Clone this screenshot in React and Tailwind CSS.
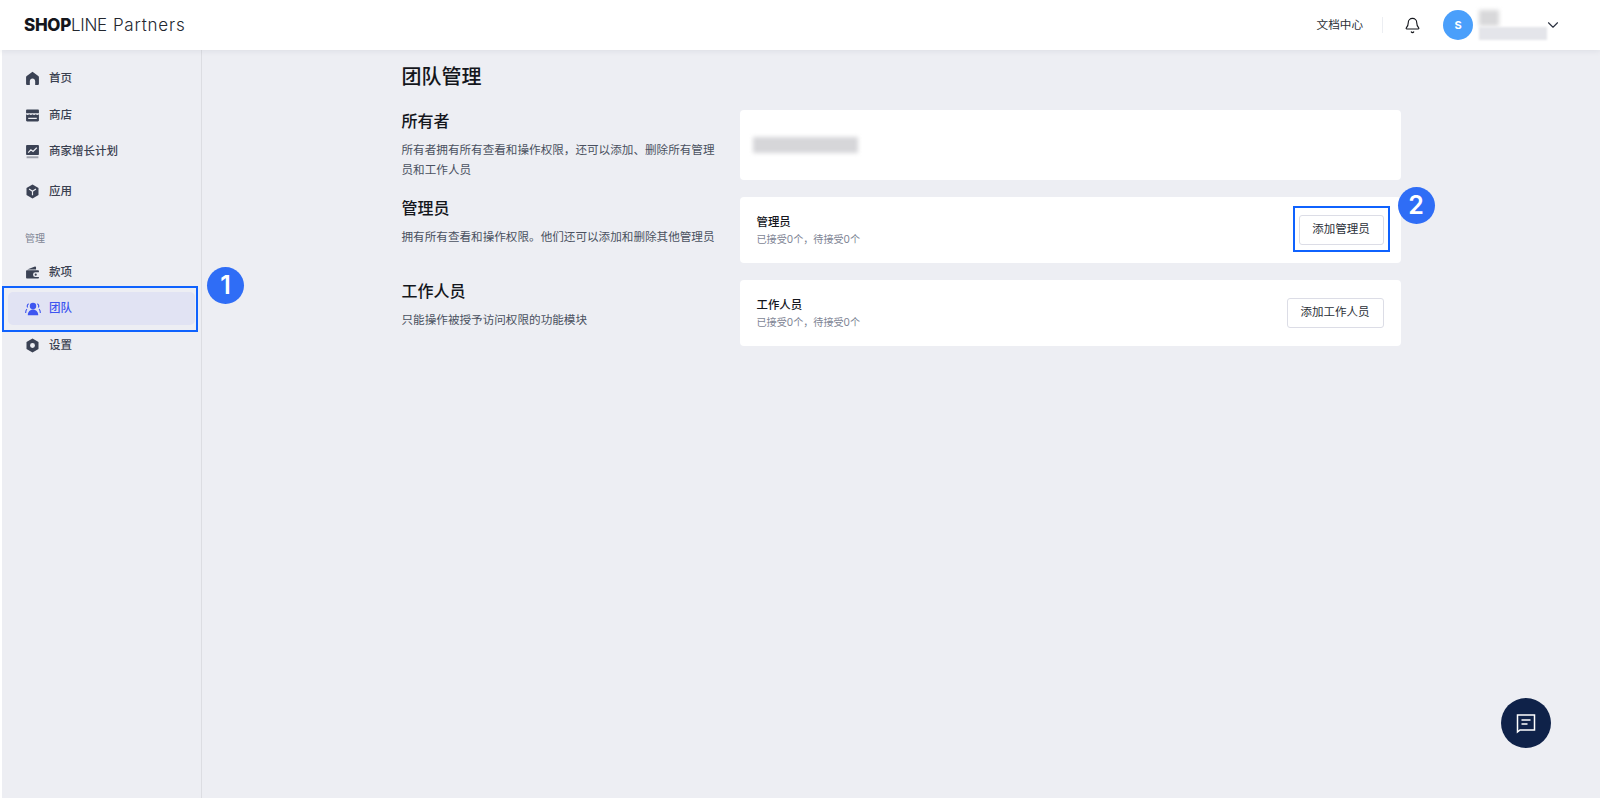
import { Bell, ChevronDown } from 'lucide-react';

const cjk = { fontFamily: 'Inter, "Noto Sans CJK SC", sans-serif' };

function HomeIcon () {
  return (
    <svg width="15" height="15" viewBox="0 0 14 14" fill="currentColor">
      <path d="M7 .8 1.600 4.600c-.4.3-.6.7-.6 1.200v6c0 .7.5 1.200 1.200 1.200h2.300V9.600c0-1.400 1.100-2.500 2.500-2.500s2.500 1.100 2.500 2.500V13h2.300c.7 0 1.200-.5 1.200-1.200v-6c0-.5-.2-.9-.6-1.200L7 .8Z" />
    </svg>
  );
}

function StoreIcon () {
  return (
    <svg width="15" height="15" viewBox="0 0 14 14" fill="currentColor">
      <path d="M2 1.500h10c.6 0 1 .4 1 1V5H1V2.500c0-.6.4-1 1-1Z" />
      <path fillRule="evenodd" d="M1 5.800c1 1 2 1 3 0 1 1 2 1 3 0 1 1 2 1 3 0 1 1 2 1 3 0v5.700c0 .6-.4 1-1 1H2c-.6 0-1-.4-1-1V5.800Zm2 3.400v1h8v-1H3Z" />
    </svg>
  );
}

function ChartIcon () {
  return (
    <svg width="15" height="15" viewBox="0 0 14 14" fill="none">
      <path d="M2 1h10c.6 0 1 .4 1 1v7.300c0 .6-.4 1-1 1H2c-.6 0-1-.4-1-1V2c0-.6.4-1 1-1Z" fill="currentColor" />
      <path d="M1.500 11.500h11v1.800h-11z" fill="currentColor" opacity=".45" />
      <path d="m3 8 2.500-2.500 2 1.500L11 3.500" stroke="#edeef3" strokeWidth="1.100" />
    </svg>
  );
}

function AppIcon () {
  return (
    <svg width="15" height="15" viewBox="0 0 14 14" fill="none">
      <path d="M7 .5 12.600 3.700v6.600L7 13.500 1.400 10.300V3.700L7 .5Z" fill="currentColor" />
      <path d="M3.800 4.600 7 6.700l3.200-2.100M7 6.700v3.800" stroke="#edeef3" strokeWidth="1.100" />
    </svg>
  );
}

function WalletIcon () {
  return (
    <svg width="15" height="15" viewBox="0 0 14 14" fill="currentColor">
      <path d="M2 4.300 9.300 1.500c.5-.2 1 .2 1 .7v2.100H2Z" />
      <path d="M1 5.500c0-.4.3-.7.7-.7h10.600c.4 0 .7.300.7.700v1.300H9.700a2.200 2.200 0 0 0 0 4.400H13v.8c0 .4-.3.700-.7.700H1.700c-.4 0-.7-.3-.7-.7V5.500Z" />
      <circle cx="10" cy="9" r="1" />
    </svg>
  );
}

function TeamIcon () {
  return (
    <svg width="16" height="14" viewBox="0 0 16 14" fill="none">
      <circle cx="8" cy="4" r="3.200" fill="currentColor" />
      <path d="M2.800 13.200c0-3.400 2.300-5.700 5.200-5.700s5.200 2.300 5.200 5.700H2.800Z" fill="currentColor" />
      <path d="M3.700 1.800C2.400 2.500 1.900 4 2.600 5.500M12.300 1.800c1.300.7 1.800 2.200 1.100 3.700M1.900 7.200C1 8.200.6 9.500.7 11M14.100 7.200c.9 1 1.300 2.300 1.200 3.800" stroke="currentColor" strokeWidth="1.100" />
    </svg>
  );
}

function GearIcon () {
  return (
    <svg width="15" height="15" viewBox="0 0 14 14" fill="currentColor">
      <path fillRule="evenodd" d="M7 .5 12.600 3.700v6.600L7 13.500 1.400 10.300V3.700L7 .5ZM7 4.700a2.300 2.300 0 1 0 0 4.600 2.300 2.300 0 0 0 0-4.600Z" />
    </svg>
  );
}

function NavItem ({ icon, label, className = '' }) {
  return (
    <div className={`h-[33px] pl-[17px] flex items-center text-[#3b4254] ${className}`}>
      <span className="w-[15px] flex justify-center">{icon}</span>
      <span className="ml-[9px] text-[11.500px] font-medium text-[#3a4050]">{label}</span>
    </div>
  );
}

function Section ({ title, desc, children, className = '' }) {
  return (
    <div className={`flex ${className}`}>
      <div className="w-[338px] shrink-0 pr-[18px]">
        <h2 className="text-[16px] leading-[22px] font-medium text-[#14161c]">{title}</h2>
        <p className="mt-[8px] text-[11.600px] leading-[20px] text-[#4a5160]">{desc}</p>
      </div>
      {children}
    </div>
  );
}

function MemberCard ({ title, children }) {
  return (
    <div className="flex-1 h-[66px] bg-white rounded-[4px] pl-[17px] pr-[17px] flex items-center justify-between">
      <div>
        <div className="text-[11.400px] leading-[16px] font-medium text-[#14161c]">{title}</div>
        <div className="text-[10.100px] leading-[16px] mt-[1px] text-[#7d8494]">已接受0个，待接受0个</div>
      </div>
      {children}
    </div>
  );
}

function Step ({ n, className }) {
  return (
    <div className={`absolute w-[37px] h-[37px] rounded-full bg-[#2f6df6] text-white flex items-center justify-center text-[25px] font-semibold ${className}`}>
      {n}
    </div>
  );
}

export default function App () {
  return (
    <div className="w-full h-[798px] bg-white flex flex-col overflow-hidden" style={cjk}>

      {/* Header */}

      <header className="relative z-10 h-[50px] shrink-0 bg-white shadow-[0_1px_6px_rgba(30,40,70,0.08)] flex items-center pl-[24px] pr-[38px]">
        <div className="mt-[1px] flex items-center text-[17px] text-[#23272f]">
          <span className="font-extrabold text-[#14161c] tracking-[-0.3px]">SHOP</span>
          <span className="font-light tracking-[-0.3px]">LINE</span>
          <span className="font-light ml-[6px] tracking-[0.8px]">Partners</span>
        </div>

        <div className="ml-auto flex items-center">
          <span className="mt-[2px] text-[11.600px] text-[#2b2f38]">文档中心</span>
          <div className="w-px h-[16px] bg-[#eceef2] ml-[19px] mr-[21px]"></div>
          <Bell size={17} strokeWidth={1.600} className="text-[#14161c]" />
          <div className="ml-[22px] w-[30px] h-[30px] rounded-full bg-[#4a9ffb] text-white text-[11px] font-bold flex items-center justify-center">
            S
          </div>
          <div className="ml-[6px] w-[68px] h-[30px] flex flex-col justify-between">
            <div className="w-[20px] h-[16px] bg-[#d8d8da] blur-[2px]"></div>
            <div className="w-[68px] h-[13px] bg-[#e4e5ea] blur-[1px]"></div>
          </div>
          <ChevronDown size={18} strokeWidth={1.500} className="ml-[-3px] text-[#2b3140]" />
        </div>
      </header>

      <div className="flex-1 flex min-h-0 pl-[2px]">

        {/* Sidebar */}

        <aside className="relative z-[5] w-[200px] shrink-0 bg-[#edeef3] border-r border-[#dcdde2] pt-[12px] px-[6px]">
          <NavItem icon={<HomeIcon />} label="首页" />
          <NavItem icon={<StoreIcon />} label="商店" className="mt-[4px]" />
          <NavItem icon={<ChartIcon />} label="商家增长计划" className="mt-[3px]" />
          <NavItem icon={<AppIcon />} label="应用" className="mt-[7px]" />
          <div className="mt-[22px] pl-[17px] h-[16px] leading-[16px] text-[10px] text-[#7d8494]">管理</div>
          <NavItem icon={<WalletIcon />} label="款项" className="mt-[10px]" />
          <div className="relative mt-[3px]">
            <div className="h-[33px] pl-[17px] flex items-center rounded-[5px] bg-[#e1e3f3] text-[#3d55f0]">
              <span className="w-[16px] flex justify-center"><TeamIcon /></span>
              <span className="ml-[8px] text-[11.500px] font-medium">团队</span>
            </div>
            {/* annotation */}
            <div className="absolute left-[-6px] right-[-3px] top-[-6px] bottom-[-7px] border-2 border-[#0f62fe]"></div>
            <Step n="1" className="left-[199px] top-[-25px]" />
          </div>
          <NavItem icon={<GearIcon />} label="设置" className="mt-[4px]" />
        </aside>

        {/* Main */}

        <main className="relative flex-1 bg-[#edeef3]">
          <div className="w-[999px] mx-auto">
            <h1 className="h-[60px] pt-[15px] text-[20px] leading-[24px] font-medium text-[#14161c]">团队管理</h1>

            <Section title="所有者" desc="所有者拥有所有查看和操作权限，还可以添加、删除所有管理员和工作人员">
              <div className="flex-1 h-[70px] bg-white rounded-[4px] pl-[13px] flex items-center">
                <div className="w-[105px] h-[16px] bg-[#d6d6d9] blur-[2px]"></div>
              </div>
            </Section>

            <Section title="管理员" desc="拥有所有查看和操作权限。他们还可以添加和删除其他管理员" className="mt-[17px]">
              <MemberCard title="管理员">
                <div className="relative">
                  <button className="h-[30px] w-[85px] bg-white border border-[#dcdde6] rounded-[3px] text-[11.500px] text-[#2b2f38]">
                    添加管理员
                  </button>
                  <div className="absolute left-[-6px] top-[-9px] w-[97px] h-[46px] border-2 border-[#0f62fe]"></div>
                  <Step n="2" className="left-[99px] top-[-28px]" />
                </div>
              </MemberCard>
            </Section>

            <Section title="工作人员" desc="只能操作被授予访问权限的功能模块" className="mt-[17px]">
              <MemberCard title="工作人员">
                <button className="h-[30px] w-[97px] bg-white border border-[#dcdde6] rounded-[3px] text-[11.500px] text-[#2b2f38]">
                  添加工作人员
                </button>
              </MemberCard>
            </Section>
          </div>

          {/* Chat */}

          <button className="absolute right-[49px] bottom-[50px] w-[50px] h-[50px] rounded-full bg-[#0f2249] flex items-center justify-center">
            <svg width="22" height="22" viewBox="0 0 22 22" fill="none" stroke="white" strokeWidth="1.500">
              <path d="M2.500 3h17v15H5l-2.500 2V3Z" />
              <path d="M6.500 8h9M6.500 12h6" />
            </svg>
          </button>
        </main>

      </div>
    </div>
  );
}
